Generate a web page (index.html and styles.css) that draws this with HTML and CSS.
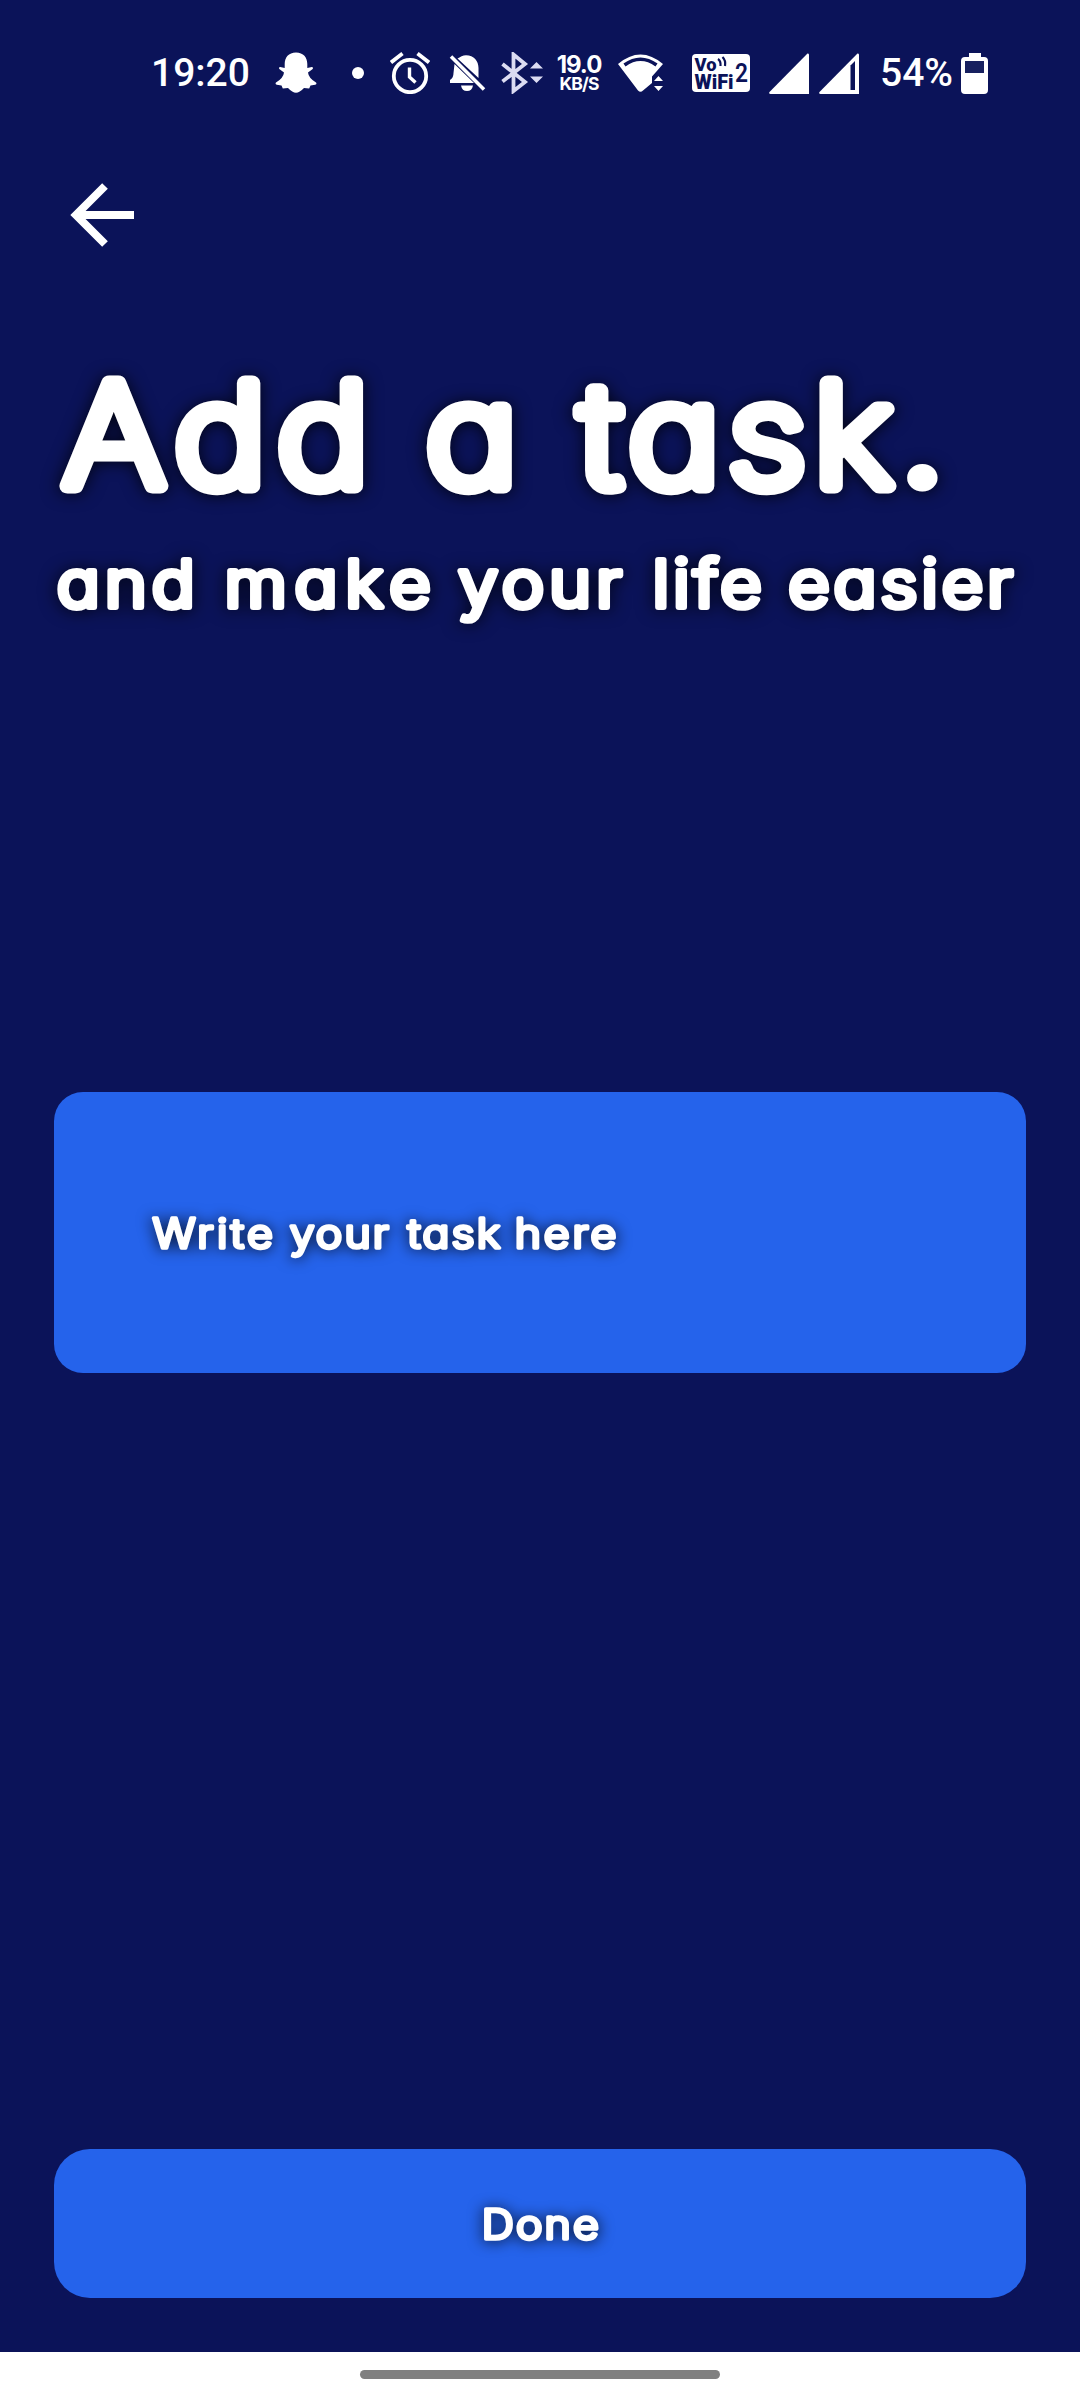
FILE: index.html
```html
<!DOCTYPE html>
<html lang="en">
<head>
<meta charset="utf-8">
<title>Add a task</title>
<link rel="stylesheet" href="styles.css">
</head>
<body>
<div class="screen">
  <div class="status">
    <span class="clock">19:20</span>
    <svg class="snap" width="42" height="42" viewBox="0 0 42 42"><path d="M21 0.5C13.5 0.5 9.7 5.5 9.7 12V16L5.2 15Q3.5 15.2 4.3 17L9 20.5Q8.5 26 1 30.5Q-.2 31.8 1.8 32.7L6.5 33.5L7.8 36.5L13 36Q17.5 40.8 21 40.8T29 36L34.2 36.5L35.5 33.5L40.2 32.7Q42.2 31.8 41 30.5Q33.5 26 33 20.5L37.7 17Q38.5 15.2 36.8 15L32.3 16V12C32.3 5.5 28.5 .5 21 .5Z" fill="#fff"/></svg>
    <span class="dot"></span>
    <svg class="alarm" width="40" height="42" viewBox="0 0 40 42" fill="none" stroke="#fff" stroke-width="3.8"><circle cx="20" cy="24" r="16.2"/><path d="M1 10.5L12.5 1.5M27.5 1.5L39 10.5"/><path d="M19.5 15.5V25L25.5 30.5" stroke-width="3.4"/></svg>
    <svg class="bell" width="38" height="40" viewBox="0 0 38 40"><path d="M8.500 5.500C11 4 14 2.200 17 2.200C25 2.200 29.500 8 29.500 15V25Z M5.500 11L25 30H1V27Q4.500 25 4.500 20Z M12 32.500H24Q23 38 18 38T12 32.500Z" fill="#fff"/><path d="M2 3.500L35 36.500" stroke="#fff" stroke-width="3.600"/></svg>
    <svg class="bluetooth" width="43" height="42" viewBox="0 0 43 42"><path d="M1.500 12L24 30L12.500 39V2.500L24 12L1.500 29.500" fill="none" stroke="#dcdcf2" stroke-width="3.800"/><path d="M29 16.500L35.500 10L42 16.500ZM29 24.500L35.500 31L42 24.500Z" fill="#dcdcf2"/></svg>
    <span class="speed"><b>19.0</b><small>KB/S</small></span>
    <svg class="wifi" width="46" height="38" viewBox="0 0 46 38"><path d="M0 10Q22.5-9 45 10L38 18L34 22.5V29L25 36.5Q22.5 39 20 36.5Z" fill="#fff"/><path d="M6.5 11Q22.5-.5 38.5 11" fill="none" stroke="#0b1359" stroke-width="3.6"/><path d="M34 37V26L40 19L46 26V37Z" fill="#0b1359"/><path d="M36 27L40.5 22L45 27ZM36 32L40.5 37L45 32Z" fill="#fff"/></svg>
    <svg class="vowifi" width="58" height="38" viewBox="0 0 58 38"><rect width="58" height="38" rx="4" fill="#fff"/><g fill="#0b1359" font-family="Roboto, sans-serif" font-weight="900"><text x="2.500" y="17" font-size="19" textLength="22" lengthAdjust="spacingAndGlyphs">Vo</text><text x="2.500" y="35" font-size="19.500" textLength="39" lengthAdjust="spacingAndGlyphs">WiFi</text><text x="43" y="28" font-size="25" font-weight="600" textLength="13" lengthAdjust="spacingAndGlyphs">2</text></g><path d="M26 5Q29 7 28.500 12M30.500 3Q34 6.500 33 12" fill="none" stroke="#0b1359" stroke-width="2.200"/></svg>
    <svg class="signal" width="40" height="41" viewBox="0 0 40 41"><path d="M38.500.5Q40 0 40 2V41H1.500Q-.5 40.500.5 39Z" fill="#fff"/></svg>
    <svg class="signal-two" width="40" height="41" viewBox="0 0 40 41"><path d="M38.500.5Q40 0 40 2V41H1.500Q-.5 40.500.5 39Z" fill="#fff"/><path d="M31.500 12.500L36 8V37H31.500Z" fill="#0b1359"/></svg>
    <span class="percent">54%</span>
    <svg class="battery" width="27" height="41" viewBox="0 0 27 41"><path d="M8 0H20V4H23Q27 4 27 8V37Q27 41 23 41H4Q0 41 0 37V8Q0 4 4 4H8Z" fill="#fff"/><rect x="4" y="8" width="19" height="12" fill="#17205f"/></svg>
  </div>

  <svg class="back" width="66" height="66" viewBox="0 0 66 66" fill="none" stroke="#fff" stroke-width="8"><path d="M64 33H8M35 4L6 33L35 62"/></svg>

  <svg class="title" width="972" height="160">
    <text y="135.500"><tspan x="8.200" letter-spacing="10">Add</tspan> <tspan x="338">a</tspan> <tspan x="478" letter-spacing="7">task<tspan class="period">.</tspan></tspan></text>
  </svg>
  <svg class="subtitle" width="972" height="100">
    <text y="67"><tspan x="2.500" letter-spacing="4.500">and</tspan> <tspan x="155" letter-spacing="7">make</tspan> <tspan x="367.600" letter-spacing="4.500">your</tspan> <tspan x="544" letter-spacing="3.500">life</tspan> <tspan x="667.500" letter-spacing="3.500">easier</tspan></text>
  </svg>

  <div class="field">
    <svg class="label" width="480" height="80"><text y="46.500"><tspan x="2.200" letter-spacing="3">Write</tspan> <tspan x="127">your</tspan> <tspan x="234">task</tspan> <tspan x="331.500" letter-spacing="2.600">here</tspan></text></svg>
  </div>

  <div class="button">
    <svg class="label" width="140" height="80"><text x="64.800" y="46.800" text-anchor="middle">Done</text></svg>
  </div>
</div>
<div class="nav"><span class="handle"></span></div>
</body>
</html>
```
FILE: styles.css
```css
* { box-sizing: border-box; }
body { margin: 0; width: 1080px; height: 2400px; display: flex; flex-direction: column; background: #fff; }
svg { display: block; flex: none; }
.screen { height: 2352px; background: #0b1359; padding: 40px 54px 54px; display: flex; flex-direction: column; }

.status { height: 66px; margin-right: -54px; padding-left: 97px; display: flex; align-items: center; color: #fff; font-family: Roboto, sans-serif; }
.clock, .percent { font-size: 39px; font-weight: 500; line-height: 66px; white-space: nowrap; }
.clock { width: 100px; }
.snap { margin-left: 24px; }
.dot { width: 12px; height: 12px; border-radius: 50%; background: #fff; margin-left: 35px; }
.alarm { margin-left: 26px; }
.bell { margin-left: 19px; }
.bluetooth { margin-left: 14px; }
.speed { width: 46px; margin-left: 12px; display: flex; flex-direction: column; align-items: center; font-family: Inter, sans-serif; }
.speed b { font-size: 24px; line-height: 21px; font-weight: 700; letter-spacing: -1px; }
.speed small { font-size: 17.500px; line-height: 17px; font-weight: 700; letter-spacing: -.8px; }
.wifi { margin-left: 16px; }
.vowifi { margin-left: 28px; }
.signal { margin-left: 19px; }
.signal-two { margin-left: 10px; }
.percent { width: 72px; margin-left: 21px; }
.battery { margin-left: 9px; }

.back { margin: 76px 0 0 16px; }
.title, .subtitle, .label { overflow: visible; }
text { white-space: pre; }
.title text, .subtitle text, .label text {
  font-family: Inter, sans-serif; font-weight: 300; font-feature-settings: "cv11" 1;
  fill: #fff; stroke: #fff; stroke-linejoin: round; stroke-linecap: round;
  transform: scaleX(1.1);
}
.title text, .subtitle text { filter: drop-shadow(0 1px 8px rgba(0, 0, 0, .8)); }
.title { margin-top: 102px; }
.title text { font-size: 141px; font-weight: 200; stroke-width: 15px; }
.title .period { font-weight: 400; stroke-width: 9px; }
.subtitle { margin-top: 30px; }
.subtitle text { font-size: 65px; stroke-width: 6px; }

.field { height: 281px; margin-top: 452px; border-radius: 29px; background: #2563eb; padding: 110px 96px 0; }
.label text { font-size: 40.500px; stroke-width: 3.600px; letter-spacing: 2px; filter: drop-shadow(0 1px 7px rgba(0, 0, 0, .8)); }
.button { height: 149px; margin-top: auto; border-radius: 36px; background: #2563eb; display: flex; justify-content: center; padding-top: 43px; }

.nav { height: 48px; display: flex; justify-content: center; padding-top: 18px; }
.handle { width: 360px; height: 9px; border-radius: 5px; background: #808080; }
```
